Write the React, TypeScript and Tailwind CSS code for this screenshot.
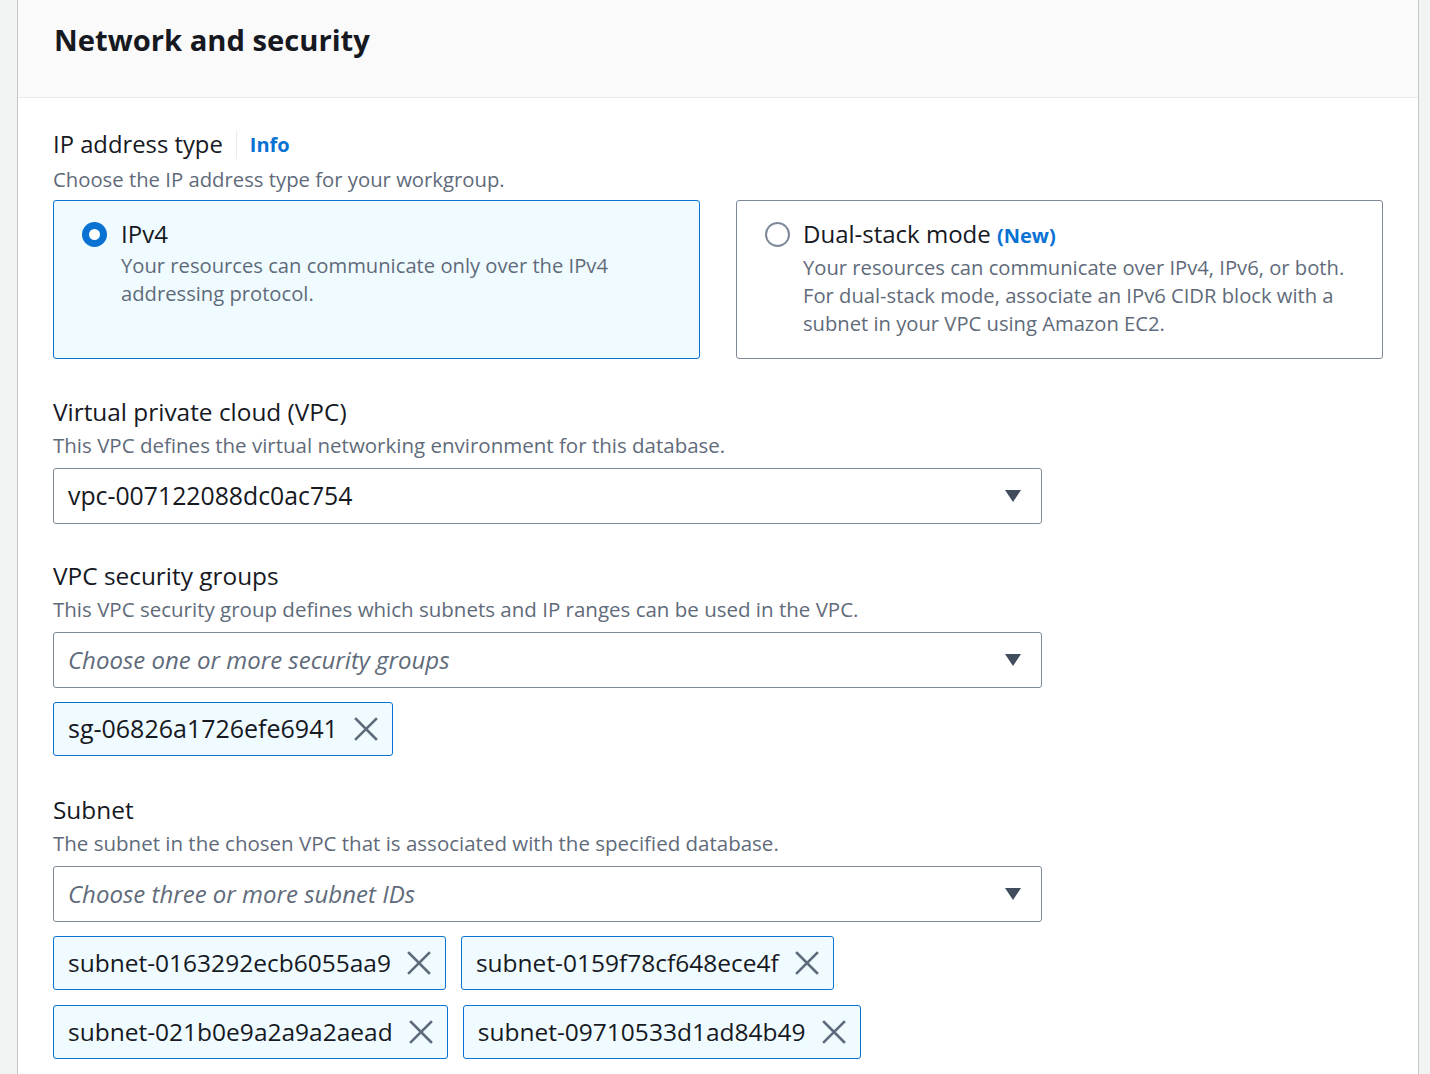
import React from "react";

const subnets = [
  "subnet-0163292ecb6055aa9",
  "subnet-0159f78cf648ece4f",
  "subnet-021b0e9a2a9a2aead",
  "subnet-09710533d1ad84b49",
  "subnet-0a4e2c81f6b3d7e21",
  "subnet-0d83b5f1c2e9a4706",
];

function Caret() {
  return (
    <svg width="18" height="14" viewBox="0 0 18 14" className="shrink-0">
      <path d="M1 1 H17 L9 13 Z" fill="#414d5c" />
    </svg>
  );
}

function XIcon() {
  return (
    <svg width="24" height="24" viewBox="0 0 24 24" className="shrink-0">
      <path d="M2 2 L22 22 M22 2 L2 22" stroke="#5f6b7a" strokeWidth="2.6" strokeLinecap="square" />
    </svg>
  );
}

function Token({ label, big }: { label: string; big?: boolean }) {
  return (
    <div
      className={
        "flex items-center h-[54px] pl-[14px] pr-[14px] gap-[16px] bg-[#f0fbff] border border-[#0972d3] rounded-[3px] text-[#16191f] " +
        (big ? "text-[25px]" : "text-[24.5px]")
      }
    >
      <span>{label}</span>
      <XIcon />
    </div>
  );
}

function Select({ value, placeholder }: { value?: string; placeholder?: string }) {
  return (
    <div className="w-[989px] h-[56px] border border-[#7d8998] rounded-[3px] flex items-center justify-between pl-[14px] pr-[19px] bg-white">
      {value ? (
        <span className="text-[24.8px] text-[#16191f]">{value}</span>
      ) : (
        <span className="text-[24px] italic text-[#5f6b7a]">{placeholder}</span>
      )}
      <Caret />
    </div>
  );
}

function Field({
  label,
  description,
  children,
}: {
  label: string;
  description: string;
  children: React.ReactNode;
}) {
  return (
    <div>
      <div className="text-[24.4px] leading-[34px] text-[#16191f]">{label}</div>
      <div className="text-[20.5px] leading-[32px] text-[#5f6b7a] mb-[7px]">{description}</div>
      {children}
    </div>
  );
}

export default function App() {
  return (
    <div
      className="w-[1430px] h-[1074px] overflow-hidden bg-[#f2f3f3] flex"
      style={{ fontFamily: '"Open Sans", "Noto Sans", sans-serif' }}
    >
      <div className="ml-[17px] w-[1402px] bg-white border-x border-[#c6c6cd] shrink-0">
        <div className="h-[98px] bg-[#fafafa] border-b border-[#e9ebed] pl-[36px] pt-[18px]">
          <h2 className="text-[29.2px] font-bold text-[#16191f] leading-[44px]">
            Network and security
          </h2>
        </div>

        <div className="pl-[35px] pr-[35px] pt-[28px] flex flex-col gap-[35px]">
          <div className="mb-[1px]">
            <div className="flex items-center h-[38px]">
              <span className="text-[23.8px] text-[#16191f]">IP address type</span>
              <span className="w-px h-[28px] bg-[#e9ebed] mx-[13px]" />
              <span className="text-[20px] font-bold text-[#0972d3]">Info</span>
            </div>
            <div className="text-[20.3px] leading-[30px] text-[#5f6b7a] mb-[6px]">
              Choose the IP address type for your workgroup.
            </div>
            <div className="grid grid-cols-2 gap-[36px]">
              <div className="h-[159px] bg-[#f0fbff] border border-[#0972d3] rounded-[3px] pl-[28px] pt-[16px] pr-[20px] flex gap-[14px]">
                <div className="w-[25px] h-[25px] rounded-full border-[7px] border-[#0972d3] bg-white mt-[5px] shrink-0" />
                <div>
                  <div className="text-[24px] leading-[34px] text-[#16191f]">IPv4</div>
                  <div className="text-[20.2px] leading-[28px] text-[#5f6b7a]">
                    Your resources can communicate only over the IPv4
                    <br />
                    addressing protocol.
                  </div>
                </div>
              </div>
              <div className="h-[159px] bg-white border border-[#7d8998] rounded-[3px] pl-[28px] pt-[16px] pr-[20px] flex gap-[13px]">
                <div className="w-[25px] h-[25px] rounded-full border-2 border-[#7d8998] bg-white mt-[5px] shrink-0" />
                <div>
                  <div className="text-[24px] leading-[34px] text-[#16191f]">
                    Dual-stack mode{" "}
                    <span className="text-[20px] font-bold text-[#0972d3]">(New)</span>
                  </div>
                  <div className="text-[20.2px] leading-[28px] text-[#5f6b7a]">
                    Your resources can communicate over IPv4, IPv6, or both.
                    <br />
                    For dual-stack mode, associate an IPv6 CIDR block with a
                    <br />
                    subnet in your VPC using Amazon EC2.
                  </div>
                </div>
              </div>
            </div>
          </div>

          <Field
            label="Virtual private cloud (VPC)"
            description="This VPC defines the virtual networking environment for this database."
          >
            <Select value="vpc-007122088dc0ac754" />
          </Field>

          <Field
            label="VPC security groups"
            description="This VPC security group defines which subnets and IP ranges can be used in the VPC."
          >
            <Select placeholder="Choose one or more security groups" />
            <div className="flex mt-[14px] mb-[2px]">
              <Token label="sg-06826a1726efe6941" big />
            </div>
          </Field>

          <Field
            label="Subnet"
            description="The subnet in the chosen VPC that is associated with the specified database."
          >
            <Select placeholder="Choose three or more subnet IDs" />
            <div className="mt-[14px] w-[989px] flex flex-col gap-[15px]">
              {[0, 2, 4].map((i) => (
                <div key={i} className="flex gap-[15px]">
                  <Token label={subnets[i]} />
                  <Token label={subnets[i + 1]} />
                </div>
              ))}
            </div>
          </Field>
        </div>
      </div>
    </div>
  );
}
